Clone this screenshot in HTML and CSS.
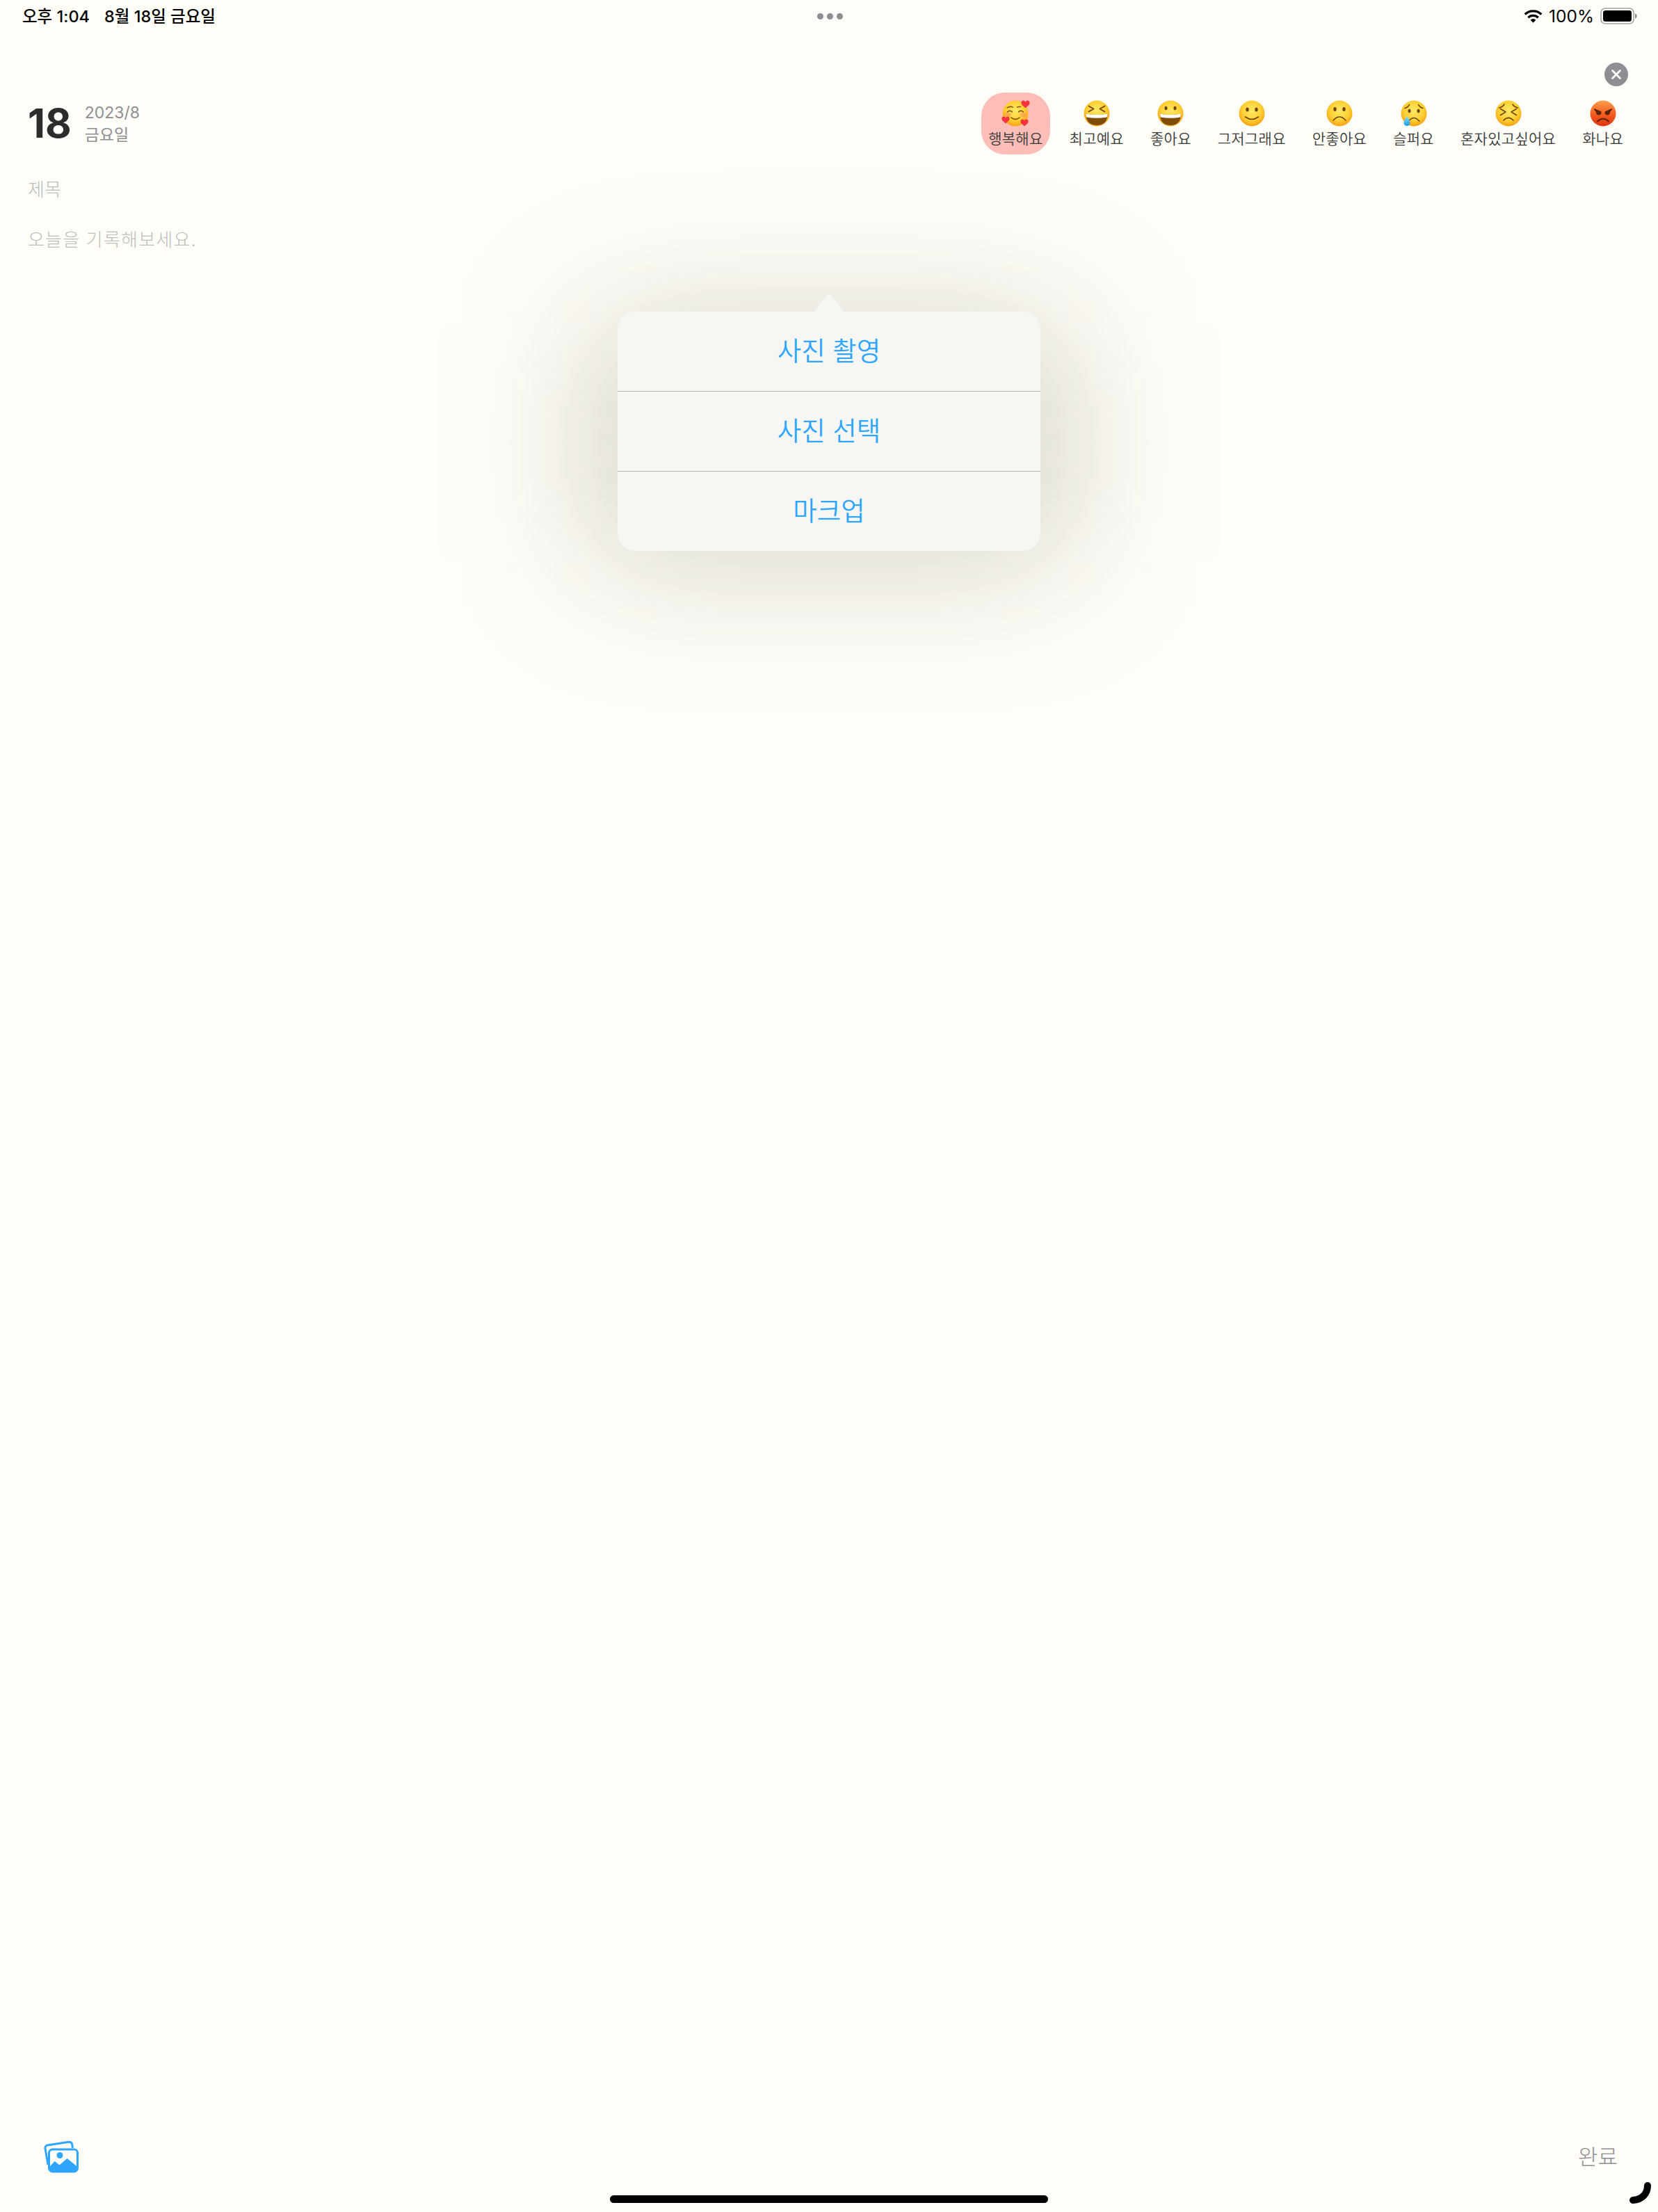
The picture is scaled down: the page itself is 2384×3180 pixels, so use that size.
FILE: index.html
```html
<!DOCTYPE html>
<html lang="ko">
<head>
<meta charset="utf-8">
<title>일기</title>
<link rel="stylesheet" href="styles.css">
</head>
<body>
<svg class="defs" aria-hidden="true">
  <defs>
    <radialGradient id="y" cx="50%" cy="40%" r="62%">
      <stop offset="0" stop-color="#ffe868"/><stop offset=".6" stop-color="#ffd034"/><stop offset="1" stop-color="#f59c10"/>
    </radialGradient>
    <linearGradient id="r" x1="0" y1="0" x2="0" y2="1">
      <stop offset="0" stop-color="#fca04c"/><stop offset=".55" stop-color="#f3591f"/><stop offset="1" stop-color="#e0340e"/>
    </linearGradient>
    <linearGradient id="t" x1="0" y1="0" x2="0" y2="1">
      <stop offset="0" stop-color="#8fdcff"/><stop offset="1" stop-color="#1a9be8"/>
    </linearGradient>
    <symbol id="heart" viewBox="-6 -5 12 12"><path fill="#f5333f" d="M0-1.600C-1.100-4.400-5.600-4.300-5.600-.6-5.600 2.400-2.200 4.200 0 6.400 2.200 4.200 5.600 2.400 5.600-.6 5.600-4.300 1.100-4.400 0-1.600Z"/></symbol>
  </defs>
</svg>
<div class="app">
  <header class="status">
    <div class="status-left"><span>오후 1:04</span><span>8월 18일 금요일</span></div>
    <div class="dots"><i></i><i></i><i></i></div>
    <div class="status-right">
      <svg class="wifi" viewBox="0 0 27 19"><g fill="none" stroke="#000" stroke-width="3.300"><path d="M1.700 6.600a17 17 0 0 1 23.600 0"/><path d="M6.300 11.300a10.300 10.300 0 0 1 14.400 0"/></g><path d="M13.500 18.800l3.900-4a5.300 5.300 0 0 0-7.800 0Z"/></svg>
      <span>100%</span>
      <svg class="battery" viewBox="0 0 53 24"><rect x="1" y="1" width="47" height="22" rx="6" fill="none" stroke="#a3a3a3" stroke-width="1.600"/><rect x="4" y="4" width="41" height="16" rx="3.500" fill="#000"/><path d="M50 8.500c1.800.6 2.800 2 2.800 3.500s-1 2.900-2.800 3.500Z" fill="#8e8e8e"/></svg>
    </div>
  </header>

  <div class="close-row">
    <button class="close" aria-label="닫기"><svg viewBox="0 0 34 34"><path d="M11.500 11.500l11 11M22.500 11.500l-11 11" stroke="#fff" stroke-width="2.800" stroke-linecap="round"/></svg></button>
  </div>

  <section class="head">
    <div class="date">
      <div class="day">18</div>
      <div class="date-lines"><div>2023/8</div><div>금요일</div></div>
    </div>
    <div class="moods">
      <div class="mood mood-on">
        <svg class="emo" viewBox="0 0 44 44">
          <circle cx="22" cy="22" r="18.500" fill="url(#y)"/>
          <ellipse cx="10.500" cy="24" rx="5" ry="3.500" fill="#fb8a5a" opacity=".55"/><ellipse cx="33.500" cy="24" rx="5" ry="3.500" fill="#fb8a5a" opacity=".55"/>
          <g fill="none" stroke="#7a4a05" stroke-width="1.300" stroke-linecap="round">
            <path d="M10 14q4.500-3 8.500-.8M24.500 13.200q2.500-1.300 5-.7"/>
            <path d="M10.500 20q3.500-3.500 7 0M26.500 20q3.500-3.500 7 0"/>
            <path d="M16 28q6 5 12 0" stroke-width="1.600"/>
          </g>
          <use href="#heart" x="30" y="2" width="13" height="13"/>
          <use href="#heart" x="2" y="25" width="12" height="12"/>
          <use href="#heart" x="29" y="29" width="12" height="12"/>
        </svg>
        <span>행복해요</span>
      </div>
      <div class="mood">
        <svg class="emo" viewBox="0 0 44 44">
          <circle cx="22" cy="22" r="18.500" fill="url(#y)"/>
          <g fill="none" stroke="#6f4304" stroke-width="1.800" stroke-linecap="round" stroke-linejoin="round"><path d="M10.500 11.500l7 4-7 4M33.500 11.500l-7 4 7 4"/></g>
          <path d="M6.500 22.500q15.500 3 31 0 0 16.500-15.500 16.500T6.500 22.500Z" fill="#7f4c06"/>
          <path d="M6.500 22.500q15.500 3 31 0 0 2.800-.9 5-14.600 2.500-29.200 0-.9-2.200-.9-5Z" fill="#fff"/>
        </svg>
        <span>최고예요</span>
      </div>
      <div class="mood">
        <svg class="emo" viewBox="0 0 44 44">
          <circle cx="22" cy="22" r="18.500" fill="url(#y)"/>
          <ellipse cx="15.500" cy="14.500" rx="2" ry="2.800" fill="#6f4304"/><ellipse cx="28.500" cy="14.500" rx="2" ry="2.800" fill="#6f4304"/>
          <path d="M7 22.500q15 3 30 0 0 16.500-15 16.500T7 22.500Z" fill="#7f4c06"/>
          <path d="M7 22.500q15 3 30 0 0 2.800-.9 5-14.100 2.500-28.200 0-.9-2.200-.9-5Z" fill="#fff"/>
        </svg>
        <span>좋아요</span>
      </div>
      <div class="mood">
        <svg class="emo" viewBox="0 0 44 44">
          <circle cx="22" cy="22" r="18.500" fill="url(#y)"/>
          <ellipse cx="15.500" cy="16.500" rx="2.200" ry="3" fill="#6f4304"/><ellipse cx="28.500" cy="16.500" rx="2.200" ry="3" fill="#6f4304"/>
          <path d="M12.500 27q9.500 7 19 0" fill="none" stroke="#6f4304" stroke-width="1.600" stroke-linecap="round"/>
        </svg>
        <span>그저그래요</span>
      </div>
      <div class="mood">
        <svg class="emo" viewBox="0 0 44 44">
          <circle cx="22" cy="22" r="18.500" fill="url(#y)"/>
          <ellipse cx="15.500" cy="16" rx="2.200" ry="3" fill="#6f4304"/><ellipse cx="28.500" cy="16" rx="2.200" ry="3" fill="#6f4304"/>
          <path d="M13 32q9-10 18 0" fill="none" stroke="#6f4304" stroke-width="1.600" stroke-linecap="round"/>
        </svg>
        <span>안좋아요</span>
      </div>
      <div class="mood">
        <svg class="emo" viewBox="0 0 44 44">
          <circle cx="22" cy="22" r="18.500" fill="url(#y)"/>
          <g fill="none" stroke="#6f4304" stroke-width="1.500" stroke-linecap="round"><path d="M9 14.500q3.500-.5 6.500-5M28.500 9.500q3 4.500 6.500 5"/><path d="M14.500 33q7.500-9 15 0" stroke-width="1.700"/></g>
          <ellipse cx="15.500" cy="18.500" rx="2" ry="2.800" fill="#6f4304"/><ellipse cx="28.500" cy="18.500" rx="2" ry="2.800" fill="#6f4304"/>
          <path d="M12 26q4.500 6 4.500 9.500a4.500 4.500 0 0 1-9 0q0-3.500 4.500-9.500Z" fill="url(#t)"/>
        </svg>
        <span>슬퍼요</span>
      </div>
      <div class="mood">
        <svg class="emo" viewBox="0 0 44 44">
          <circle cx="22" cy="22" r="18.500" fill="url(#y)"/>
          <g fill="none" stroke="#6f4304" stroke-width="1.500" stroke-linecap="round" stroke-linejoin="round">
            <path d="M8.500 14q5-1 7.500-5M28 9q2.500 4 7.500 5"/>
            <path d="M10.500 15.500l7.500 4.500-7.500 4.500M33.500 15.500l-7.500 4.500 7.500 4.500"/>
            <path d="M15 32q7-7 14 0" stroke-width="1.700"/>
          </g>
        </svg>
        <span>혼자있고싶어요</span>
      </div>
      <div class="mood">
        <svg class="emo" viewBox="0 0 44 44">
          <circle cx="22" cy="22" r="18.500" fill="url(#r)"/>
          <path d="M9.500 15l10 4.500v1.800q-1 3.200-4 3.200t-3.800-4.800L9 16.500ZM34.500 15l-10 4.500v1.800q1 3.200 4 3.200t3.800-4.800l2.700-3.200Z" fill="#5d2103"/>
          <path d="M14 33.500q8-7.500 16 0" fill="none" stroke="#5d2103" stroke-width="2" stroke-linecap="round"/>
        </svg>
        <span>화나요</span>
      </div>
    </div>
  </section>

  <main class="editor">
    <div class="title-ph">제목</div>
    <div class="body-ph">오늘을 기록해보세요.</div>
  </main>

  <footer class="toolbar">
    <svg class="gallery" viewBox="0 0 60 48">
      <path d="M13 35 9 11.500a4 4 0 0 1 3.300-4.600L43 2.300a4 4 0 0 1 4.600 3.300l1 5.400" fill="none" stroke="#2ea6ff" stroke-width="3"/>
      <rect x="14.500" y="13" width="41" height="32" rx="5" fill="#fffdf8" stroke="#2ea6ff" stroke-width="3"/>
      <circle cx="30" cy="21.500" r="4.500" fill="#2ea6ff"/>
      <path d="M14.500 39l8-9 7 5.500 11-9.500 15 12v3a4 4 0 0 1-4 4H18.500a4 4 0 0 1-4-4Z" fill="#2ea6ff"/>
    </svg>
    <span class="done">완료</span>
  </footer>
  <div class="home-row"><div class="home-bar"></div></div>

  <svg class="corner" viewBox="0 0 36 36"><path d="M29 6c0 12-8 20-21 21" fill="none" stroke="#000" stroke-width="10" stroke-linecap="round"/></svg>

  <div class="popover">
    <svg class="arrow" viewBox="0 0 60 28"><path d="M0 28c5 0 8-1 10-4L27 2c1.500-2 4.500-2 6 0l17 22c2 3 5 4 10 4Z"/></svg>
    <div class="pop-item">사진 촬영</div>
    <div class="pop-item">사진 선택</div>
    <div class="pop-item">마크업</div>
  </div>
</div>
</body>
</html>
```

FILE: styles.css
```css
* { box-sizing: border-box; }
html, body { margin: 0; padding: 0; background: #fffdf8; }
body { font-family: "Inter", "Noto Sans CJK KR", sans-serif; }
.defs { display: block; width: 0; height: 0; }
.app { position: relative; isolation: isolate; width: 2384px; height: 3180px; overflow: hidden; display: flex; flex-direction: column; }

.status { height: 46px; padding: 0 30px 2px 32px; display: grid; grid-template-columns: 1fr auto 1fr; align-items: center; font-size: 23.5px; font-weight: 500; color: #000; }
.status-left { display: flex; gap: 21px; }
.dots { display: flex; gap: 5px; padding-top: 2px; }
.dots i { width: 9px; height: 9px; border-radius: 50%; background: #8e8e93; }
.status-right { display: flex; justify-content: flex-end; align-items: center; gap: 9px; font-size: 24.500px; font-weight: 400; padding-top: 2px; }
.wifi { width: 27px; height: 19px; }
.battery { width: 53px; height: 24px; }

.close-row { padding: 44px 43px 9px 0; display: flex; justify-content: flex-end; }
.close { width: 34px; height: 34px; padding: 0; border: 0; border-radius: 50%; background: #8e8e93; display: block; }
.close svg { display: block; width: 34px; height: 34px; }

.head { height: 89px; padding: 0 40px; display: flex; justify-content: space-between; align-items: flex-start; }
.date { display: flex; gap: 19px; padding-top: 14px; }
.day { font-size: 58px; font-weight: 700; color: #2c2c2c; line-height: 60px; }
.date-lines { font-size: 23px; line-height: 32px; color: #8e8e93; margin-top: -1px; }
.moods { display: flex; gap: 18px; }
.mood { padding: 8px 10px 0; height: 89px; display: flex; flex-direction: column; align-items: center; border-radius: 34px; font-size: 21px; font-weight: 350; line-height: 30px; letter-spacing: .28px; color: #3a3a3a; }
.mood-on { background: #ffbdb8; }
.emo { width: 44px; height: 44px; display: block; }

.editor { flex: 1; padding: 0 40px; }
.title-ph { margin-top: 32px; font-size: 26px; font-weight: 300; line-height: 38px; color: #bdbdbd; }
.body-ph { margin-top: 34px; font-size: 26px; font-weight: 300; line-height: 38px; color: #bdbdbd; letter-spacing: 1.200px; }

.toolbar { height: 86px; padding: 0 58px 0 56px; display: flex; justify-content: space-between; align-items: center; }
.gallery { width: 60px; height: 48px; display: block; }
.done { font-size: 31px; font-weight: 300; color: #8e8e93; margin-bottom: 5px; }
.home-row { height: 36px; padding-top: 12px; display: flex; justify-content: center; }
.home-bar { width: 630px; height: 11px; border-radius: 6px; background: #000; }
.corner { position: absolute; left: 2340px; top: 3136px; width: 36px; height: 36px; }

.popover { position: absolute; left: 888px; top: 448px; width: 608px; border-radius: 26px; background: #f6f6f3; }
.popover::before { content: ""; position: absolute; z-index: -1; inset: 15px -40px -15px -40px; border-radius: 26px; background: rgba(46, 50, 14, .2); filter: blur(104px); }
.arrow { position: absolute; left: 274px; top: -26px; width: 60px; height: 28px; fill: #f6f6f3; }
.pop-item { height: 115px; padding-bottom: 8px; display: flex; align-items: center; justify-content: center; font-size: 37.500px; font-weight: 350; color: #2ea6ff; border-top: 1px solid #b4b4b0; }
.pop-item:first-of-type { border-top: 0; height: 114px; }
```
